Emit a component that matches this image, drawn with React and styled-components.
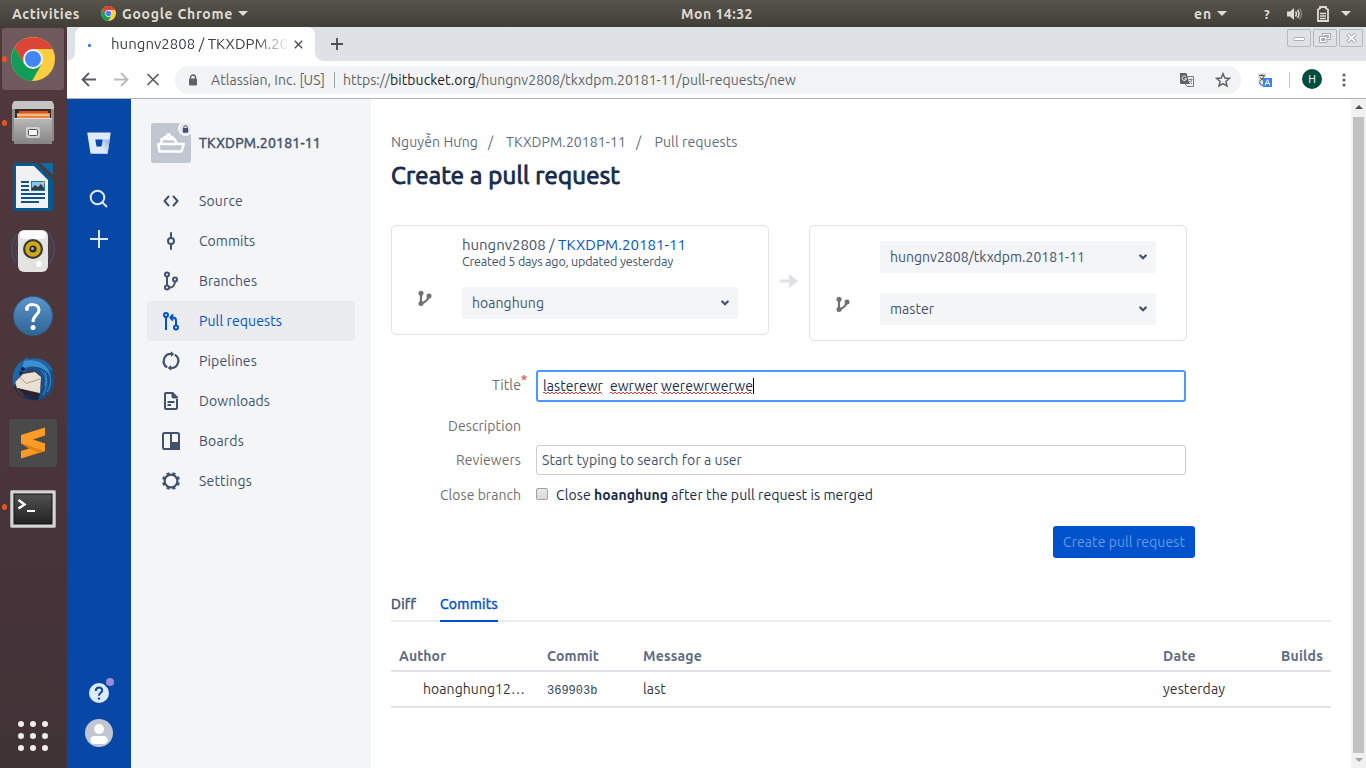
import React, { useLayoutEffect, useRef, useState } from "react";
import styled, { createGlobalStyle, css } from "styled-components";

const GlobalStyle = createGlobalStyle`
  * { box-sizing: border-box; }
  body { margin: 0; overflow: hidden; background: #fff; }
  body, button, input { font-family: Ubuntu, "Noto Sans", "Open Sans", sans-serif; }
  svg { display: block; flex: none; overflow: visible; }
`;

/* Text whose tracking is tuned so that it fills a given advance width. */
const Label = styled.span`
  display: inline-block;
  flex: none;
  white-space: pre;
  font-size: ${(p) => p.$size || 14}px;
  font-weight: ${(p) => (p.$medium ? 400 : p.$weight || 400)};
  -webkit-text-stroke: ${(p) => (p.$medium ? `${p.$medium}px currentColor` : "0")};
  color: ${(p) => p.$color || "inherit"};
`;

function T({ w, size, weight, medium, color, children, ...rest }) {
  const ref = useRef(null);
  const [tracking, setTracking] = useState(0);
  useLayoutEffect(() => {
    const natural = ref.current.getBoundingClientRect().width;
    if (w) setTracking((w - natural) / ref.current.textContent.length);
  }, [w]);
  return (
    <Label ref={ref} $size={size} $weight={weight} $medium={medium} $color={color} style={{ letterSpacing: tracking }} {...rest}>
      {children}
    </Label>
  );
}

/* ---------- desktop ---------- */
const Desktop = styled.div`
  width: 1366px;
  height: 768px;
  display: flex;
  flex-direction: column;
  overflow: hidden;
`;
const TopBar = styled.header`
  flex: none;
  height: 27px;
  display: grid;
  grid-template-columns: 669px auto 1fr;
  align-items: center;
  padding: 0 15px 0 12px;
  background: linear-gradient(#57544b, #403e38);
  color: #dfdbd2;
`;
const BarGroup = styled.div`
  display: flex;
  align-items: center;
  justify-content: ${(p) => (p.$end ? "flex-end" : "flex-start")};
`;
const Gap = styled.span`
  flex: none;
  width: ${(p) => p.$w}px;
`;
const Caret = styled.i`
  border: 5px solid transparent;
  border-top-color: #dfdbd2;
  border-bottom: 0;
`;
const Body = styled.div`
  flex: 1;
  min-height: 0;
  display: flex;
`;
const Dock = styled.nav`
  flex: none;
  width: 67px;
  padding: 1px 0 0 2px;
  display: flex;
  flex-direction: column;
  gap: 2px;
  background: linear-gradient(#51383b, #4d373c 30%, #46333a 75%, #3f3335);
`;
const Slot = styled.div`
  position: relative;
  flex: none;
  width: 62px;
  height: 62px;
  padding-top: ${(p) => p.$drop || 0}px;
  border-radius: 3px;
  display: grid;
  place-items: center;
  background: ${(p) => (p.$active ? "#6f5a5e" : "none")};
  ${(p) =>
    p.$running &&
    css`
      &::before {
        content: "";
        position: absolute;
        left: 0;
        top: 28px;
        width: 5px;
        height: 6px;
        border-radius: 3px;
        background: #e95420;
      }
    `}
`;
const AppsGrid = styled.div`
  margin: auto auto 17px 16px;
  display: grid;
  grid-template-columns: repeat(3, 6px);
  gap: 6px;
`;
const AppsDot = styled.i`
  height: 6px;
  border-radius: 50%;
  background: #eeeeec;
`;

/* ---------- browser ---------- */
const Browser = styled.main`
  flex: 1;
  min-width: 0;
  display: flex;
  flex-direction: column;
  background: #fff;
`;
const TabStrip = styled.div`
  flex: none;
  height: 34px;
  display: flex;
  padding-left: 8px;
  background: #dee1e6;
`;
const Tab = styled.div`
  position: relative;
  width: 240px;
  padding: 0 11px 0 13px;
  display: flex;
  align-items: center;
  border-radius: 8px 8px 0 0;
  background: #fff;
  &::before,
  &::after {
    content: "";
    position: absolute;
    bottom: 0;
    width: 8px;
    height: 8px;
  }
  &::before {
    left: -8px;
    background: radial-gradient(circle at 0 0, transparent 7.5px, #fff 8px);
  }
  &::after {
    right: -8px;
    background: radial-gradient(circle at 100% 0, transparent 7.5px, #fff 8px);
  }
`;
const Spinner = styled.i`
  width: 3px;
  height: 3px;
  margin-top: 3px;
  border-radius: 1px;
  background: #3b7de8;
`;
const TabTitle = styled.div`
  margin: -2px 0 0 20px;
  width: 176px;
  overflow: hidden;
  color: #3c4043;
  mask-image: linear-gradient(90deg, #000 145px, transparent 178px);
`;
const WindowButtons = styled.div`
  margin-left: auto;
  padding: 2px 3px 0 0;
  display: flex;
  gap: 2px;
`;
const WindowButton = styled.div`
  width: 24px;
  height: 18px;
  display: grid;
  place-items: center;
  border: 1px solid #b4b7bb;
  border-radius: 2px;
`;
const Toolbar = styled.div`
  flex: none;
  height: 38px;
  display: flex;
  align-items: center;
  padding: 0 16px 0 14px;
  border-bottom: 1px solid #b3b3b5;
  background: #fff;
`;
const Omnibox = styled.div`
  margin-left: 14px;
  width: 1066px;
  height: 28px;
  display: flex;
  align-items: center;
  padding: 0 10px 0 13px;
  border-radius: 14px;
  background: #f1f3f4;
  color: #5f6368;
`;
const Separator = styled.i`
  width: 1px;
  height: 16px;
  background: ${(p) => p.$color || "#9aa0a6"};
`;
const Profile = styled.div`
  width: 20px;
  height: 20px;
  margin-top: -2px;
  border-radius: 50%;
  display: grid;
  place-items: center;
  background: #004d40;
  color: #fff;
`;
const Page = styled.div`
  flex: 1;
  min-height: 0;
  display: flex;
`;
const GlobalNav = styled.nav`
  flex: none;
  width: 64px;
  padding: 33px 0 21px;
  display: flex;
  flex-direction: column;
  align-items: center;
  background: #0747a6;
  color: #deebff;
`;
const NavIcon = styled.div`
  position: relative;
  margin-top: ${(p) => p.$top || "0"};
`;
const HelpDot = styled.i`
  position: absolute;
  right: -5px;
  top: -5px;
  width: 8px;
  height: 8px;
  border-radius: 50%;
  background: #998dd9;
`;
const Sidebar = styled.aside`
  flex: none;
  width: 240px;
  padding: 24px 16px;
  background: #f4f5f7;
  color: #42526e;
`;
const RepoHeader = styled.div`
  display: flex;
  align-items: center;
  gap: 8px;
  padding-left: 4px;
  margin-bottom: 18px;
`;
const RepoAvatar = styled.div`
  position: relative;
  width: 40px;
  height: 40px;
  display: grid;
  place-items: center;
  border-radius: 3px;
  background: #c1c7d0;
`;
const LockBadge = styled.div`
  position: absolute;
  right: -2px;
  top: -2px;
  width: 15px;
  height: 15px;
  display: grid;
  place-items: center;
  border: 2px solid #f4f5f7;
  border-radius: 50%;
  background: #e3e6ea;
`;
const MenuItem = styled.div`
  height: 40px;
  padding-left: 12px;
  display: flex;
  align-items: center;
  gap: 16px;
  border-radius: 3px;
  color: ${(p) => (p.$selected ? "#0052cc" : "#42526e")};
  background: ${(p) => (p.$selected ? "#ebecf0" : "none")};
`;
const IconBox = styled.div`
  width: 24px;
  height: 24px;
  display: grid;
  place-items: center;
`;
const Content = styled.section`
  flex: 1;
  min-width: 0;
  padding: 33px 20px 0;
  color: #172b4d;
`;
const Scrollbar = styled.div`
  flex: none;
  width: 15px;
  padding: 6px 2px 6px;
  display: flex;
  flex-direction: column;
  align-items: center;
  background: #f1f1f1;
`;
const ScrollArrow = styled.i`
  border: 4px solid transparent;
  ${(p) =>
    p.$down
      ? css`
          border-top-color: #a3a3a3;
          border-bottom: 0;
        `
      : css`
          border-bottom-color: #505050;
          border-top: 0;
        `}
`;
const ScrollThumb = styled.div`
  flex: 1;
  width: 11px;
  margin: 8px 0 5px;
  background: #c1c1c1;
`;

/* ---------- pull request page ---------- */
const Breadcrumbs = styled.div`
  height: 20px;
  display: flex;
  align-items: center;
  color: #5e6c84;
`;
const Heading = styled.h1`
  margin: 8px 0 0;
  height: 32px;
  line-height: 32px;
  font-size: 24px;
`;
const Compare = styled.div`
  margin-top: 33px;
  display: flex;
  align-items: flex-start;
`;
const BranchCard = styled.div`
  width: 378px;
  height: ${(p) => p.$h}px;
  border: 1px solid #dfe1e6;
  border-radius: 5px;
  padding: ${(p) => p.$top}px 30px 0 26px;
  display: flex;
  flex-direction: column;
`;
const RepoLine = styled.div`
  height: ${(p) => p.$h}px;
  margin-left: 44px;
  display: flex;
  align-items: center;
  color: #42526e;
`;
const BranchRow = styled.div`
  margin-top: ${(p) => p.$top}px;
  display: flex;
  justify-content: space-between;
`;
const BranchGlyph = styled.div`
  padding-top: 4px;
  color: #707070;
`;
const Select = styled.div`
  width: 276px;
  height: 32px;
  margin-left: auto;
  padding: 0 8px 0 10px;
  display: flex;
  align-items: center;
  justify-content: space-between;
  border-radius: 3px;
  background: #f4f5f7;
  color: #42526e;
`;
const ArrowCell = styled.div`
  width: 40px;
  padding: 48px 0 0 11px;
`;
const Form = styled.div`
  width: 795px;
  margin-top: 29px;
  display: grid;
  grid-template-columns: 130px 1fr;
  column-gap: 15px;
`;
const FieldLabel = styled.div`
  display: flex;
  align-items: center;
  justify-content: flex-end;
  height: ${(p) => p.$h}px;
  margin-top: ${(p) => p.$top || 0}px;
  color: #707070;
`;
const Required = styled.sup`
  width: 0;
  font-size: 13px;
  line-height: 12px;
  margin-top: -12px;
  color: #d04437;
  -webkit-text-stroke: 0.2px #d04437;
`;
const Field = styled.div`
  display: flex;
  align-items: center;
  height: ${(p) => p.$h}px;
  margin-top: ${(p) => p.$top || 0}px;
`;
const TextBox = styled(Field)`
  padding: 0 0 ${(p) => (p.$focus ? 2 : 0)}px 5px;
  border: ${(p) => (p.$focus ? "2px solid #4c9aff" : "1px solid #ccc")};
  border-radius: 3px;
`;
const Misspelled = styled.span`
  position: relative;
  &::after {
    content: "";
    position: absolute;
    left: 0;
    right: 1px;
    bottom: 0;
    height: 2px;
    background: repeating-linear-gradient(90deg, #e33 0 2px, transparent 2px 4px) 0 0 / 100% 1px no-repeat,
      repeating-linear-gradient(90deg, transparent 0 2px, #e33 2px 4px) 0 1px / 100% 1px no-repeat;
  }
`;
const TextCursor = styled.i`
  width: 1px;
  height: 16px;
  margin-top: 1px;
  background: #000;
`;
const Checkbox = styled.i`
  width: 12px;
  height: 12px;
  margin: 0 8px 2px 0;
  border: 1px solid #a3a3a3;
  border-radius: 2px;
  background: linear-gradient(#e9e9e9, #d9d9d9);
`;
const Actions = styled.div`
  width: 804px;
  margin-top: 21px;
  display: flex;
  justify-content: flex-end;
`;
const SubmitButton = styled.button`
  width: 142px;
  height: 32px;
  padding: 0 0 0 10px;
  border: 0;
  border-radius: 3px;
  text-align: left;
  background: #0052cc;
  color: #669be4;
`;
const Tabs = styled.div`
  margin-top: 29px;
  height: 35px;
  display: flex;
  gap: 24px;
  border-bottom: 2px solid #ebecf0;
`;
const PageTab = styled.div`
  height: 35px;
  padding-top: 6px;
  line-height: 20px;
  color: ${(p) => (p.$active ? "#0052cc" : "#42526e")};
  border-bottom: 2px solid ${(p) => (p.$active ? "#0052cc" : "transparent")};
`;
const CommitTable = styled.div`
  margin-top: 21px;
`;
const CommitRow = styled.div`
  height: ${(p) => (p.$head ? 29 : 36)}px;
  display: grid;
  grid-template-columns: 148px 96px 520px 110px 1fr;
  align-items: center;
  padding: 0 8px ${(p) => (p.$head ? 3 : 2)}px;
  border-bottom: 2px solid #dfe1e6;
  color: ${(p) => (p.$head ? "#5e6c84" : "#333")};
`;
const Indent = styled.div`
  padding-left: 24px;
`;
const RightCell = styled.div`
  text-align: right;
`;
const Hash = styled.span`
  padding-top: 5px;
  font: 12px "Liberation Mono", monospace;
  color: #344563;
`;

/* ---------- icons ---------- */
const ChromeLogo = ({ size }) => (
  <svg width={size} height={size} viewBox="0 0 44 44">
    <circle cx="22" cy="22" r="22" fill="#ffcd40" />
    <path d="M22 12H41.6A22 22 0 0 0 3.4 10.5L13.3 27 22 22Z" fill="#db4437" />
    <path d="M3.4 10.5A22 22 0 0 0 21 44L30.7 27 22 22 13.3 27Z" fill="#0f9d58" />
    <circle cx="22" cy="22" r="10" fill="#f1f1f1" />
    <circle cx="22" cy="22" r="8" fill="#4285f4" />
  </svg>
);
const FilesLogo = () => (
  <svg width="42" height="44" viewBox="0 0 42 44">
    <defs>
      <linearGradient id="cab" x2="0" y2="1">
        <stop stopColor="#b9b9b9" />
        <stop offset="1" stopColor="#858585" />
      </linearGradient>
    </defs>
    <path d="M2 0H40L42 3V40H0V3Z" fill="#8c8c8c" />
    <path d="M2 0H40L42 5V8H0V5Z" fill="#c4c4c4" />
    <path d="M3 8H39V20H3Z" fill="#3a2b25" />
    <path d="M7 10H36V19H7Z" fill="#d9541e" />
    <path d="M5 12H38V19H5Z" fill="#e8853a" />
    <path d="M5 13.5H37V14.5H5Z" fill="#fff0d5" />
    <path d="M2 17H40V43H2Z" fill="url(#cab)" />
    <path d="M2 17H40V18H2Z" fill="#ddd" />
    <rect x="14" y="26" width="14" height="11" rx="2" fill="#d0d0d0" />
    <rect x="16.5" y="28.5" width="9" height="6" rx="1" fill="#f5f5f5" stroke="#555" />
  </svg>
);
const WriterLogo = () => (
  <svg width="40" height="48" viewBox="0 0 40 48">
    <path d="M2 0H23L40 17V46Q40 48 38 48H2Q0 48 0 46V2Q0 0 2 0Z" fill="#06598f" />
    <path d="M28 0H38Q40 0 40 2V12L28 1Z" fill="#0a6ba5" />
    <path d="M3 3H21L35 17V45H3Z" fill="#f1f1f1" />
    <path d="M8 19H16M8 23H16M8 27H16M8 31H32M8 35H32M8 39H26" stroke="#0e5484" strokeWidth="2" />
    <path d="M18 18H32V28H18Z" fill="#1c78b0" />
    <path d="M19 19H31V27H19Z" fill="#8cc6ea" />
    <path d="M19 27V25L22 22 25 24 28 21 31 25V27Z" fill="#333c42" />
    <circle cx="30" cy="20" r="1.6" fill="#e9c34b" />
  </svg>
);
const SpeakerLogo = () => (
  <svg width="48" height="42" viewBox="0 0 48 42">
    <g fill="none" stroke="#465a80" strokeWidth="1.6" opacity=".6">
      <path d="M8 4Q-2 18 7 33M40 4Q50 18 41 33" />
      <path d="M10 7Q3 18 10 31M38 7Q45 18 38 31" opacity=".7" />
    </g>
    <rect x="9" y="0" width="30" height="42" rx="6" fill="#e3e3e1" />
    <rect x="11" y="1" width="26" height="8" rx="4" fill="#fbfbfb" />
    <circle cx="24" cy="19" r="10" fill="#3b3a34" />
    <circle cx="24" cy="19" r="7.8" fill="#cfaa1b" />
    <circle cx="24" cy="19" r="3.6" fill="#2d2c2a" />
    <circle cx="23.5" cy="18.5" r="1.5" fill="#aaa" />
    <circle cx="30" cy="34" r="3.5" fill="#fff" stroke="#ccc" strokeWidth=".6" />
  </svg>
);
const HelpLogo = () => (
  <svg width="40" height="40" viewBox="0 0 40 40">
    <defs>
      <linearGradient id="help" x2="0" y2="1">
        <stop stopColor="#5b95cd" />
        <stop offset="1" stopColor="#2f6494" />
      </linearGradient>
    </defs>
    <circle cx="20" cy="20" r="19.5" fill="url(#help)" stroke="#2e5c88" />
    <path d="M13.5 13C14 7 26 7 26 14C26 19 20 19 20 26" fill="none" stroke="#fff" strokeWidth="3" />
    <circle cx="14" cy="13" r="2" fill="#fff" />
    <circle cx="20" cy="31.500" r="2.500" fill="#fff" />
  </svg>
);
const BirdLogo = () => (
  <svg width="44" height="44" viewBox="0 0 44 44">
    <path d="M5 22C2 31 8 39 14 40L12 34C20 40 30 40 33 42C20 46 6 40 3 30Z" fill="#172f5c" />
    <path d="M14 4C30 -2 43 8 43 22C43 34 35 43 27 43L30 36 24 38C32 32 33 22 27 16C22 12 16 13 12 17Z" fill="#174f8c" />
    <path d="M4 25L12 17 24 15 30 20 29 36 6 31Z" fill="#e8e1d3" />
    <path d="M9 20L15 26.500 29 22" fill="none" stroke="#a89e8d" />
    <path d="M6 31L29 37 26 43 14 38Z" fill="#2b2230" />
    <path d="M3 30C-1 18 4 8 11 4L16 0 18 2C29 -1 39 5 42 14L34 12C24 6 17 9 14 14L9 19C6 21 4 25 3 30Z" fill="#1f66a8" />
    <path d="M13 4C25 1 37 7 40 19C34 11 25 8 16 10L11 13Z" fill="#3c91ce" />
    <path d="M34 15C37 23 36 31 32 38M38 17C41 24 39 30 36 35M30 13C34 18 36 22 34 29" fill="none" stroke="#3d8dc8" />
    <circle cx="12" cy="12" r="2" fill="#10204a" />
    <path d="M8 14L9 19 13 15Z" fill="#14284f" />
  </svg>
);
const SublimeLogo = () => (
  <svg width="48" height="48" viewBox="0 0 48 48">
    <rect width="48" height="48" rx="3" fill="#4a4a4a" />
    <path d="M12 32L36 24.500V32L12 39.500Z" fill="#ff9a22" />
    <path d="M12 24.500L36 32 30 34 20 29.500Z" fill="#e8820f" />
    <path d="M12 16L36 8.500V16.500L24 20.500 36 24.500V32L12 24.500Z" fill="#ff9c25" />
  </svg>
);
const TerminalLogo = () => (
  <svg width="46" height="38" viewBox="0 0 46 38">
    <defs>
      <linearGradient id="term" x2="0" y2="1">
        <stop stopColor="#515151" />
        <stop offset="1" stopColor="#222" />
      </linearGradient>
    </defs>
    <rect x=".5" y=".5" width="45" height="37" rx="1" fill="#d4d4d4" stroke="#aaa" />
    <rect x="4" y="4" width="38" height="30" fill="url(#term)" stroke="#111" />
    <path d="M8.500 10L14.500 14.500 8.500 18.500" fill="none" stroke="#fff" strokeWidth="2.400" />
    <path d="M17 21H25" stroke="#fff" strokeWidth="2" />
  </svg>
);

const Line = ({ w = 24, h = w, sw = 2, children, ...p }) => (
  <svg width={w} height={h} viewBox={`0 0 ${w} ${h}`} fill="none" stroke="currentColor" strokeWidth={sw} {...p}>
    {children}
  </svg>
);
const icons = {
  source: (
    <Line strokeLinecap="round" strokeLinejoin="round">
      <path d="M9.500 7.500L5.500 12 9.500 16.500M14.500 7.500L18.500 12 14.500 16.500" />
    </Line>
  ),
  commits: (
    <Line>
      <circle cx="12" cy="12" r="3" />
      <path d="M12 4V9M12 15V20" strokeLinecap="round" />
    </Line>
  ),
  branches: (
    <Line>
      <circle cx="8" cy="5.500" r="2" />
      <circle cx="8" cy="18.500" r="2" />
      <circle cx="16" cy="10.500" r="2" />
      <path d="M8 7.500V16.500M10 18.500H11.500Q15.500 18 16 12.500" />
    </Line>
  ),
  pulls: (
    <Line>
      <circle cx="7" cy="6" r="2" />
      <path d="M7 8V21M11.500 8.500H14Q17 8.500 17 11.500V16" />
      <circle cx="17" cy="18.500" r="2" />
      <path d="M14 5.500L11.500 8.500 14 11.500" strokeLinejoin="round" />
    </Line>
  ),
  pipelines: (
    <Line sw={2.2}>
      <path d="M8.200 18.400A7.300 7.300 0 0 1 12.500 4.900M15.800 5.600A7.300 7.300 0 0 1 11.500 19.100" />
      <path d="M12 2.200L15.200 5 12 8ZM12 16L8.800 19 12 21.800Z" fill="currentColor" stroke="none" />
    </Line>
  ),
  downloads: (
    <Line>
      <path d="M18 10V19Q18 20 17 20H7Q6 20 6 19V5Q6 4 7 4H13" strokeLinejoin="round" />
      <path d="M12.500 3H14L19 8V9.500H14.500Q12.500 9.500 12.500 7.500Z" fill="currentColor" stroke="none" />
      <path d="M8.500 13H15.500M8.500 16H12" />
    </Line>
  ),
  boards: (
    <Line>
      <rect x="4" y="4" width="16" height="16" rx="1.500" />
      <path d="M12 4V20" />
      <path d="M12 14H20V20H12Z" fill="currentColor" />
    </Line>
  ),
  settings: (
    <Line>
      <circle cx="12" cy="12" r="6.400" strokeWidth="2.200" />
      <circle cx="12" cy="12" r="7.900" strokeWidth="2.200" pathLength="16" strokeDasharray="1 1" strokeDashoffset="-.5" />
    </Line>
  ),
};
const BranchIcon = () => (
  <Line w={14} h={16} sw={2.2}>
    <path d="M3 2.500V12.500M3 12.500Q9.500 10.500 11 5" />
    <g fill="currentColor" stroke="none">
      <circle cx="3" cy="2.200" r="2.500" />
      <circle cx="3" cy="12.500" r="2.500" />
      <circle cx="11" cy="5" r="2.500" />
    </g>
  </Line>
);
const Chevron = () => (
  <Line w={10} h={8} sw={2.2} strokeLinecap="round">
    <path d="M2.200 2.500L5 5.300 7.800 2.500" />
  </Line>
);
const SmallLock = ({ w = 10, h = 12, color = "#5f6368" }) => (
  <svg width={w} height={h} viewBox="0 0 10 12">
    <path d="M2.500 6V3.500A2.500 2.500 0 0 1 7.500 3.500V6" fill="none" stroke={color} strokeWidth="1.400" />
    <rect x="1" y="4.500" width="8" height="7" rx="1" fill={color} />
  </svg>
);

const dockApps = [
  { icon: <ChromeLogo size={44} />, active: true, running: true },
  { icon: <FilesLogo />, running: true },
  { icon: <WriterLogo /> },
  { icon: <SpeakerLogo /> },
  { icon: <HelpLogo />, drop: 2 },
  { icon: <BirdLogo /> },
  { icon: <SublimeLogo /> },
  { icon: <TerminalLogo />, running: true, drop: 4 },
];
const menu = [
  ["source", "Source", 44],
  ["commits", "Commits", 56],
  ["branches", "Branches", 58],
  ["pulls", "Pull requests", 83],
  ["pipelines", "Pipelines", 58],
  ["downloads", "Downloads", 71],
  ["boards", "Boards", 45],
  ["settings", "Settings", 53],
];

function BranchSelect({ text, w }) {
  return (
    <Select>
      <T w={w}>{text}</T>
      <Chevron />
    </Select>
  );
}

function SystemBar() {
  return (
    <TopBar>
      <BarGroup>
        <T w={68} weight={600}>Activities</T>
        <Gap $w={21} />
        <ChromeLogo size={15} />
        <Gap $w={6} />
        <T w={111} weight={600}>Google Chrome</T>
        <Gap $w={5} />
        <Caret />
      </BarGroup>
      <T w={72} weight={600}>Mon 14:32</T>
      <BarGroup $end>
        <T w={18} weight={600}>en</T>
        <Gap $w={5} />
        <Caret />
        <Gap $w={37} />
        <T w={9} size={13} weight={700}>?</T>
        <Gap $w={14} />
        <svg width="16" height="14" viewBox="0 0 16 14">
          <path d="M0 4.500H3L7 1V13L3 9.500H0Z" fill="#dfdbd2" />
          <path d="M8.500 4.500Q10.500 7 8.500 9.500M10.500 3Q13.500 7 10.500 11" fill="none" stroke="#dfdbd2" strokeWidth="1.500" />
          <path d="M12.500 1.500Q16.500 7 12.500 12.500" fill="none" stroke="#8b8880" strokeWidth="1.300" />
        </svg>
        <Gap $w={14} />
        <svg width="12" height="16" viewBox="0 0 12 16">
          <path d="M1 3.500L3 2.500V1H9V2.500L11 3.500V15H1Z" fill="none" stroke="#dfdbd2" strokeWidth="1.800" />
          <path d="M3 7.500H9M3 10H9M3 12.500H9" stroke="#dfdbd2" strokeWidth="1.300" />
        </svg>
        <Gap $w={12} />
        <Caret />
      </BarGroup>
    </TopBar>
  );
}

function BrowserChrome() {
  return (
    <>
      <TabStrip>
        <Tab>
          <Spinner />
          <TabTitle>
            <T w={224} size={15}>hungnv2808 / TKXDPM.20181-11</T>
          </TabTitle>
          <Gap $w={7} />
          <Line w={9} sw={1.4} color="#4a4d51">
            <path d="M.8 .8L8.200 8.200M8.200 .8L.8 8.200" />
          </Line>
        </Tab>
        <Gap $w={16} />
        <Line w={12} h={34} sw={1.8} color="#4a4d51">
          <path d="M6 11V23M0 17H12" />
        </Line>
        <WindowButtons>
          <WindowButton>
            <svg width="12" height="8" viewBox="0 0 12 8">
              <rect x=".5" y="3.500" width="11" height="3" rx="1" fill="#fff" stroke="#aaadb2" />
            </svg>
          </WindowButton>
          <WindowButton>
            <svg width="12" height="10" viewBox="0 0 12 10" fill="#fff" stroke="#a4a7ac">
              <path d="M3.500 .5H11.500V6.500H3.500ZM5.500 2.500H9.500V4.500H5.500Z" fillRule="evenodd" />
              <path d="M.5 3.500H8V9.500H.5ZM2.500 5.500H6V7.500H2.500Z" fillRule="evenodd" />
            </svg>
          </WindowButton>
          <WindowButton>
            <svg width="11" height="10" viewBox="0 0 11 10" fill="none">
              <path d="M1.500 1L9.500 9M9.500 1L1.500 9" stroke="#a4a7ac" strokeWidth="3.600" />
              <path d="M1.800 1.300L9.200 8.700M9.200 1.300L1.800 8.700" stroke="#fff" strokeWidth="1.700" />
            </svg>
          </WindowButton>
        </WindowButtons>
      </TabStrip>
      <Toolbar>
        <Line w={16} sw={1.8} color="#5a5d62">
          <path d="M15 7.500H2M8 1L1.500 7.500 8 14" />
        </Line>
        <Gap $w={16} />
        <Line w={16} sw={1.8} color="#b8babd">
          <path d="M1 7.500H14M8 1L14.500 7.500 8 14" />
        </Line>
        <Gap $w={18} />
        <Line w={12} color="#5a5d62" sw={1.7}>
          <path d="M.5 0L11.500 11M11.500 0L.5 11" />
        </Line>
        <Gap $w={2} />
        <Omnibox>
          <SmallLock />
          <Gap $w={13} />
          <T w={114}>Atlassian, Inc. [US]</T>
          <Gap $w={9} />
          <Separator />
          <Gap $w={8} />
          <T w={47}>https://</T>
          <T w={86} color="#202124">bitbucket.org</T>
          <T w={320}>/hungnv2808/tkxdpm.20181-11/pull-requests/new</T>
          <Gap $w={384} />
          <svg width="14" height="14" viewBox="0 0 14 14">
            <path d="M5.500 3.500H13.500V13.500H7L5 11" fill="none" stroke="#777b80" />
            <path d="M0 0H6.500L9.500 11H1Q0 11 0 10Z" fill="#5f6368" />
            <path d="M6.200 4A2.200 2.200 0 1 0 6.500 5.800H4.500" fill="none" stroke="#fff" />
            <path d="M8.500 6.500H12.500M10.500 5.500V6.500M12 6.500Q11 9.500 9 11M9.500 8Q10.500 10 12 11" fill="none" stroke="#777b80" strokeWidth=".9" />
          </svg>
          <Gap $w={21} />
          <svg width="16" height="16" viewBox="0 0 16 16">
            <path d="M8 1.800L9.800 6.100 14.300 6.400 10.900 9.400 12 13.900 8 11.500 4 13.900 5.100 9.400 1.700 6.400 6.200 6.100Z" fill="none" stroke="#5f6368" strokeWidth="1.500" />
          </svg>
        </Omnibox>
        <Gap $w={17} />
        <svg width="14" height="14" viewBox="0 0 14 14">
          <rect width="8" height="10" fill="#e6e3da" />
          <path d="M1 2.500H7M4 1V2.500M6 3Q5 6.500 1.500 8M2 4Q4 7 6.500 8" fill="none" stroke="#555" />
          <path d="M1.500 9Q2 12 5 12.500" fill="none" stroke="#3d82ef" strokeWidth="1.500" />
          <rect x="5" y="5" width="9" height="9" fill="#3b80f0" />
          <path d="M7 12.500L9.500 6.500 12 12.500M8 10.500H11" fill="none" stroke="#fff" />
        </svg>
        <Gap $w={17} />
        <Separator $color="#c6c8cb" />
        <Gap $w={12} />
        <Profile>
          <T size={11}>H</T>
        </Profile>
        <Gap $w={20} />
        <svg width="4" height="14" viewBox="0 0 4 14" fill="#5f6368">
          <circle cx="2" cy="2" r="1.600" />
          <circle cx="2" cy="7" r="1.600" />
          <circle cx="2" cy="12" r="1.600" />
        </svg>
      </Toolbar>
    </>
  );
}

function GlobalRail() {
  return (
    <GlobalNav>
      <NavIcon>
        <svg width="24" height="22" viewBox="0 0 24 22">
          <defs>
            <linearGradient id="bb" x1="1" y1="0.2" x2=".4" y2=".9">
              <stop stopColor="#9db8e2" />
              <stop offset="1" stopColor="#deebff" />
            </linearGradient>
          </defs>
          <path d="M.8 .5H23.200Q23.800 .5 23.700 1L20.700 21Q20.600 21.700 20 21.700H4.200Q3.500 21.700 3.400 21L.3 1Q.2 .5 .8 .5Z" fill="#deebff" />
          <path d="M15.500 7.500H22.700L20.700 21 18 21.700 14 15Z" fill="url(#bb)" />
          <path d="M8.300 7.500H15.700L14.600 14.600H9.500Z" fill="#0747a6" />
        </svg>
      </NavIcon>
      <NavIcon $top="35px">
        <Line w={20} sw={2}>
          <circle cx="8.500" cy="8.500" r="6.800" />
          <path d="M13.500 13.500L18 18" />
        </Line>
      </NavIcon>
      <NavIcon $top="21px">
        <Line w={18}>
          <path d="M9 0V18M0 9H18" />
        </Line>
      </NavIcon>
      <NavIcon $top="auto">
        <svg width="20" height="20" viewBox="0 0 20 20">
          <circle cx="10" cy="10" r="10" fill="#deebff" />
          <path d="M6.800 8C6.800 3.300 13.400 3.600 13.200 7.600C13 10 10 9.700 10 12.800" fill="none" stroke="#0747a6" strokeWidth="2" />
          <circle cx="10" cy="15.600" r="1.200" fill="#0747a6" />
          <circle cx="21" cy="-1" r="6" fill="#0747a6" />
        </svg>
        <HelpDot />
      </NavIcon>
      <NavIcon $top="16px">
        <svg width="28" height="28" viewBox="0 0 28 28">
          <circle cx="14" cy="14" r="14" fill="#c1c7d0" />
          <circle cx="14" cy="10" r="5" fill="#fff" />
          <rect x="5.500" y="17" width="17" height="8" rx="4" fill="#fff" />
        </svg>
      </NavIcon>
    </GlobalNav>
  );
}

function RepoSidebar() {
  return (
    <Sidebar>
      <RepoHeader>
        <RepoAvatar>
          <svg width="28" height="20" viewBox="0 0 28 20" fill="none" stroke="#fff" strokeWidth="2.500" strokeLinejoin="round">
            <path d="M1.300 11H26.700L24.500 18.500H2.500ZM4.500 11V6H17.500L20 11M7.500 6V4H10L10.500 1.500H12.500L13 4H15.500V6" />
          </svg>
          <LockBadge>
            <SmallLock w={7} h={8} color="#42526e" />
          </LockBadge>
        </RepoAvatar>
        <T w={122} medium={0.5}>TKXDPM.20181-11</T>
      </RepoHeader>
      {menu.map(([icon, text, w]) => (
        <MenuItem key={icon} $selected={icon === "pulls"}>
          <IconBox>{icons[icon]}</IconBox>
          <T w={w}>{text}</T>
        </MenuItem>
      ))}
    </Sidebar>
  );
}

function PullRequestForm() {
  return (
    <>
      <Form>
        <FieldLabel $h={30}>
          <T w={29}>Title</T>
          <Required>*</Required>
        </FieldLabel>
        <TextBox $h={32} $focus>
          <Misspelled><T w={60}>lasterewr</T></Misspelled>
          <Gap $w={7} />
          <Misspelled><T w={48}>ewrwer</T></Misspelled>
          <Gap $w={3} />
          <Misspelled><T w={92}>werewrwerwe</T></Misspelled>
          <TextCursor />
        </TextBox>
        <FieldLabel $h={20} $top={14}>
          <T w={73}>Description</T>
        </FieldLabel>
        <Field $h={20} $top={14} />
        <FieldLabel $h={30} $top={9}>
          <T w={65}>Reviewers</T>
        </FieldLabel>
        <TextBox $h={30} $top={9}>
          <T w={200} color="#42526e">Start typing to search for a user</T>
        </TextBox>
        <FieldLabel $h={20} $top={10}>
          <T w={81}>Close branch</T>
        </FieldLabel>
        <Field $h={20} $top={10}>
          <Checkbox />
          <T w={38}>Close </T>
          <T w={74} weight={700}>hoanghung</T>
          <T w={205}> after the pull request is merged</T>
        </Field>
      </Form>
      <Actions>
        <SubmitButton>
          <T w={122}>Create pull request</T>
        </SubmitButton>
      </Actions>
    </>
  );
}

function PullRequestPage() {
  return (
    <Content>
      <Breadcrumbs>
        <T w={87}>Nguyễn Hưng</T>
        <Gap $w={10} />
        <T w={6}>/</T>
        <Gap $w={12} />
        <T w={120}>TKXDPM.20181-11</T>
        <Gap $w={10} />
        <T w={6}>/</T>
        <Gap $w={12.5} />
        <T w={83}>Pull requests</T>
      </Breadcrumbs>
      <Heading>
        <T w={229} size={24} medium={1}>Create a pull request</T>
      </Heading>
      <Compare>
        <BranchCard $h={110} $top={8}>
          <RepoLine $h={20}>
            <T w={96} size={15}>hungnv2808 / </T>
            <T w={128} size={15} color="#0052cc">TKXDPM.20181-11</T>
          </RepoLine>
          <RepoLine $h={14}>
            <T w={211} size={12.5}>Created 5 days ago, updated yesterday</T>
          </RepoLine>
          <BranchRow $top={19}>
            <BranchGlyph>
              <BranchIcon />
            </BranchGlyph>
            <BranchSelect text="hoanghung" w={72} />
          </BranchRow>
        </BranchCard>
        <ArrowCell>
          <svg width="19" height="16" viewBox="0 0 19 16">
            <path d="M0 6.500H9V1L18 8 9 15V9.500H0Z" fill="#dfe1e6" />
          </svg>
        </ArrowCell>
        <BranchCard $h={116} $top={15}>
          <BranchRow $top={0}>
            <BranchSelect text="hungnv2808/tkxdpm.20181-11" w={195} />
          </BranchRow>
          <BranchRow $top={20}>
            <BranchGlyph>
              <BranchIcon />
            </BranchGlyph>
            <BranchSelect text="master" w={44} />
          </BranchRow>
        </BranchCard>
      </Compare>
      <PullRequestForm />
      <Tabs>
        <PageTab>
          <T w={25} medium={0.5}>Diff</T>
        </PageTab>
        <PageTab $active>
          <T w={58} medium={0.5}>Commits</T>
        </PageTab>
      </Tabs>
      <CommitTable>
        <CommitRow $head>
          <div><T w={47} weight={600}>Author</T></div>
          <div><T w={52} weight={600}>Commit</T></div>
          <div><T w={59} weight={600}>Message</T></div>
          <div><T w={33} weight={600}>Date</T></div>
          <RightCell><T w={42} weight={600}>Builds</T></RightCell>
        </CommitRow>
        <CommitRow>
          <Indent><T w={102}>hoanghung12…</T></Indent>
          <Hash>369903b</Hash>
          <div><T w={23}>last</T></div>
          <div><T w={62}>yesterday</T></div>
          <span />
        </CommitRow>
      </CommitTable>
    </Content>
  );
}

export default function App() {
  return (
    <Desktop>
      <GlobalStyle />
      <SystemBar />
      <Body>
        <Dock>
          {dockApps.map((app, i) => (
            <Slot key={i} $active={app.active} $running={app.running} $drop={app.drop}>
              {app.icon}
            </Slot>
          ))}
          <AppsGrid>
            {Array.from({ length: 9 }, (_, i) => (
              <AppsDot key={i} />
            ))}
          </AppsGrid>
        </Dock>
        <Browser>
          <BrowserChrome />
          <Page>
            <GlobalRail />
            <RepoSidebar />
            <PullRequestPage />
            <Scrollbar>
              <ScrollArrow />
              <ScrollThumb />
              <ScrollArrow $down />
            </Scrollbar>
          </Page>
        </Browser>
      </Body>
    </Desktop>
  );
}
